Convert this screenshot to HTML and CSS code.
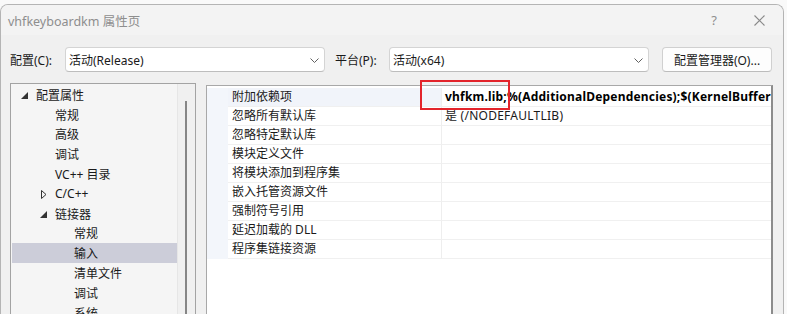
FILE: index.html
```html
<!DOCTYPE html>
<html lang="zh-CN">
<head>
    <meta charset="UTF-8">
    <title>vhfkeyboardkm 属性页</title>
    <link rel="stylesheet" href="styles.css">
</head>
<body>

<div class="window">
    <!-- Barra del titolo -->
    <div class="titlebar">
        <span class="title">vhfkeyboardkm 属性页</span>
        <span class="help">?</span>
        <svg class="close" width="11" height="11" viewBox="0 0 11 11">
            <path d="M0.5 0.5 L10.5 10.5 M10.5 0.5 L0.5 10.5" stroke="#8a8a8a" stroke-width="1.1" fill="none"/>
        </svg>
    </div>

    <!-- Configurazione / piattaforma -->
    <div class="config-row">
        <span class="label label-config">配置(C):</span>
        <div class="select">
            <span>活动(Release)</span>
            <svg class="chevron" width="9" height="5" viewBox="0 0 9 5"><path d="M0.5 0.5 L4.5 4.5 L8.5 0.5" stroke="#606060" fill="none"/></svg>
        </div>
        <span class="label label-platform">平台(P):</span>
        <div class="select">
            <span>活动(x64)</span>
            <svg class="chevron" width="9" height="5" viewBox="0 0 9 5"><path d="M0.5 0.5 L4.5 4.5 L8.5 0.5" stroke="#606060" fill="none"/></svg>
        </div>
        <button class="manager-btn">配置管理器(O)...</button>
    </div>

    <div class="main">
        <!-- Albero a sinistra -->
        <div class="tree">
            <div class="tree-list">
                <div class="tree-row lvl0"><svg class="arrow" width="7" height="7" viewBox="0 0 7 7"><path d="M7 0 L7 7 L0 7 Z" fill="#333"/></svg>配置属性</div>
                <div class="tree-row lvl1">常规</div>
                <div class="tree-row lvl1">高级</div>
                <div class="tree-row lvl1">调试</div>
                <div class="tree-row lvl1">VC++ 目录</div>
                <div class="tree-row lvl1"><svg class="arrow open" width="6" height="9" viewBox="0 0 6 9"><path d="M0.5 0.5 L5 4.5 L0.5 8.5 Z" stroke="#333" fill="none"/></svg>C/C++</div>
                <div class="tree-row lvl1"><svg class="arrow" width="7" height="7" viewBox="0 0 7 7"><path d="M7 0 L7 7 L0 7 Z" fill="#333"/></svg>链接器</div>
                <div class="tree-row lvl2">常规</div>
                <div class="tree-row lvl2 selected">输入</div>
                <div class="tree-row lvl2">清单文件</div>
                <div class="tree-row lvl2">调试</div>
                <div class="tree-row lvl2">系统</div>
            </div>
            <div class="vscroll"><div class="thumb"></div></div>
        </div>

        <!-- Griglia delle proprietà -->
        <div class="grid">
            <div class="prop-row current"><span class="gutter"></span><span class="name">附加依赖项</span><span class="value bold">vhfkm.lib;%(AdditionalDependencies);$(KernelBuffer</span></div>
            <div class="prop-row"><span class="gutter"></span><span class="name">忽略所有默认库</span><span class="value">是 (/NODEFAULTLIB)</span></div>
            <div class="prop-row"><span class="gutter"></span><span class="name">忽略特定默认库</span><span class="value"></span></div>
            <div class="prop-row"><span class="gutter"></span><span class="name">模块定义文件</span><span class="value"></span></div>
            <div class="prop-row"><span class="gutter"></span><span class="name">将模块添加到程序集</span><span class="value"></span></div>
            <div class="prop-row"><span class="gutter"></span><span class="name">嵌入托管资源文件</span><span class="value"></span></div>
            <div class="prop-row"><span class="gutter"></span><span class="name">强制符号引用</span><span class="value"></span></div>
            <div class="prop-row"><span class="gutter"></span><span class="name">延迟加载的 DLL</span><span class="value"></span></div>
            <div class="prop-row"><span class="gutter"></span><span class="name">程序集链接资源</span><span class="value"></span></div>
        </div>
    </div>
</div>

<!-- Riquadro rosso di evidenziazione -->
<div class="highlight"></div>

</body>
</html>
```

FILE: styles.css
```css
/* Impostazioni generali */
body {
    margin: 0;
    background-color: #f9f9f9;
    font-family: "Noto Sans", "Noto Sans CJK SC", sans-serif;
    font-size: 12px;
    color: #1a1a1a;
    overflow: hidden;
    position: relative;
    height: 314px;
}

.window {
    width: 784px;
    height: 330px;
    margin-top: 4px;
    box-sizing: border-box;
    border: 1px solid #b4b4b4;
    border-bottom: none;
    border-radius: 8px 8px 0 0;
    background-color: #f0f0f0;
    overflow: hidden;
}

/* Barra del titolo */
.titlebar {
    height: 30px;
    display: flex;
    align-items: center;
    background-color: #f3f3f3;
    padding-left: 7px;
}

.title {
    flex: 1;
    color: #8e8e8e;
    font-size: 12.5px;
}

.help {
    color: #8e8e8e;
    font-size: 13px;
    margin-right: 37px;
}

.close {
    margin-right: 18px;
}

/* Riga configurazione */
.config-row {
    display: flex;
    align-items: center;
    padding-top: 12px;
    padding-left: 9px;
    height: 25px;
}

.label {
    white-space: nowrap;
}

.label-config {
    width: 55px;
}

.label-platform {
    width: 54px;
    margin-left: 10px;
}

.select {
    width: 260px;
    height: 25px;
    box-sizing: border-box;
    border: 1px solid #d4d4d4;
    border-bottom-color: #bdbdbd;
    border-radius: 4px;
    background-color: #fff;
    display: flex;
    align-items: center;
    justify-content: space-between;
    padding: 0 5px 0 3px;
}

.chevron {
    margin-top: 1px;
}

.manager-btn {
    margin-left: 13px;
    width: 110px;
    height: 25px;
    font-family: inherit;
    font-size: 12px;
    color: #1a1a1a;
    background-color: #fdfdfd;
    border: 1px solid #d0d0d0;
    border-bottom-color: #bcbcbc;
    border-radius: 4px;
    padding: 0;
}

/* Area principale */
.main {
    display: flex;
    gap: 10px;
    margin-top: 11px;
    padding-left: 9px;
}

.tree {
    width: 186px;
    height: 240px;
    box-sizing: border-box;
    border: 1px solid #a3a3a3;
    background-color: #f5f5f5;
    display: flex;
}

.tree-list {
    width: 166px;
    padding-top: 1px;
}

.tree-row {
    height: 19.8px;
    display: flex;
    align-items: center;
    white-space: nowrap;
    position: relative;
}

.tree-row.lvl0 { padding-left: 25px; }
.tree-row.lvl1 { padding-left: 44px; }
.tree-row.lvl2 { padding-left: 63px; }

.tree-row .arrow {
    position: absolute;
    top: 7px;
}

.lvl0 .arrow { left: 10px; }
.lvl1 .arrow { left: 29px; }
.lvl1 .arrow.open { left: 30px; top: 6px; }

.tree-row.selected {
    background-color: #cccdd9;
    margin-left: 1px;
    padding-left: 62px;
}

.vscroll {
    flex: 1;
    border-left: 1px solid #e6e6e6;
    background-color: #f0f0f0;
    position: relative;
}

.thumb {
    position: absolute;
    left: 7px;
    top: 17px;
    width: 2px;
    height: 230px;
    background-color: #868686;
}

/* Griglia proprietà */
.grid {
    width: 567px;
    height: 240px;
    box-sizing: border-box;
    margin-top: 2px;
    padding-top: 2px;
    border-top: 1px solid #a8a8a8;
    border-left: 1px solid #a8a8a8;
    border-right: 2px solid #8c8c8c;
    background-color: #fff;
}

.prop-row {
    display: flex;
    height: 19px;
    line-height: 18px;
}

.gutter {
    width: 21px;
    background-color: #f3f6fb;
}

.name {
    width: 214px;
    box-sizing: border-box;
    padding-left: 4px;
    border-bottom: 1px solid #f0f0f0;
    border-right: 1px solid #eeeeee;
    white-space: nowrap;
}

.prop-row.current .name {
    background-color: #f1f4fa;
}

.value {
    flex: 1;
    padding-left: 3px;
    border-bottom: 1px solid #f0f0f0;
    white-space: nowrap;
    overflow: hidden;
    letter-spacing: 0.25px;
}

.value.bold {
    font-weight: bold;
    color: #000;
    letter-spacing: 0.2px;
}

.highlight {
    position: absolute;
    left: 420px;
    top: 80px;
    width: 90px;
    height: 30px;
    box-sizing: border-box;
    border: 2px solid #e3242b;
}
```
